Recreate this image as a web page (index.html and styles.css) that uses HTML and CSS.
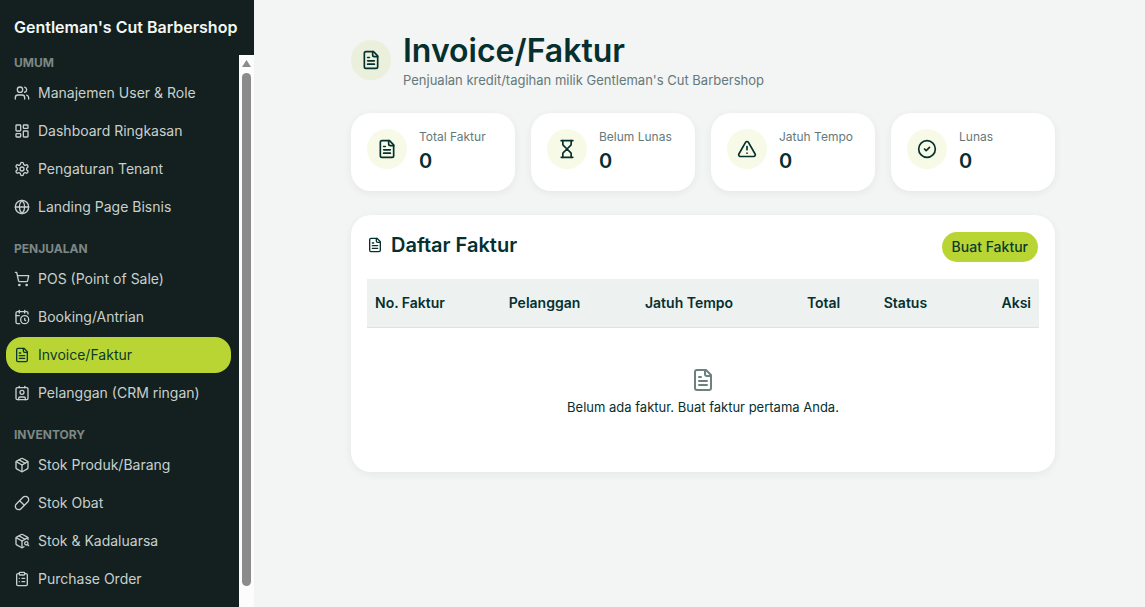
FILE: index.html
```html
<!DOCTYPE html>
<html lang="id">
<head>
    <meta charset="UTF-8">
    <meta name="viewport" content="width=device-width, initial-scale=1.0">
    <title>Invoice/Faktur - Gentleman's Cut Barbershop</title>
    <link rel="stylesheet" href="styles.css">
</head>
<body>
    <!-- Shared icons -->
    <svg class="sprite" aria-hidden="true">
        <symbol id="icon-file" viewBox="0 0 24 24">
            <path d="M15 2H6a2 2 0 0 0-2 2v16a2 2 0 0 0 2 2h12a2 2 0 0 0 2-2V7Z"/>
            <path d="M14 2v4a2 2 0 0 0 2 2h4"/>
            <path d="M10 9H8"/>
            <path d="M16 13H8"/>
            <path d="M16 17H8"/>
        </symbol>
    </svg>

    <div class="layout">
        <aside class="sidebar">
            <div class="brand">Gentleman's Cut Barbershop</div>
            <div class="sidebar-body">
                <nav class="nav">
                    <div class="nav-group">
                        <h2 class="nav-label">UMUM</h2>
                        <a href="#" class="nav-item">
                            <svg class="icon" viewBox="0 0 24 24"><path d="M16 21v-2a4 4 0 0 0-4-4H6a4 4 0 0 0-4 4v2"/><circle cx="9" cy="7" r="4"/><path d="M22 21v-2a4 4 0 0 0-3-3.87"/><path d="M16 3.13a4 4 0 0 1 0 7.75"/></svg>
                            <span>Manajemen User &amp; Role</span>
                        </a>
                        <a href="#" class="nav-item">
                            <svg class="icon" viewBox="0 0 24 24"><rect x="3" y="3" width="7" height="9" rx="1"/><rect x="14" y="3" width="7" height="5" rx="1"/><rect x="14" y="12" width="7" height="9" rx="1"/><rect x="3" y="16" width="7" height="5" rx="1"/></svg>
                            <span>Dashboard Ringkasan</span>
                        </a>
                        <a href="#" class="nav-item">
                            <svg class="icon" viewBox="0 0 24 24"><path d="M12.22 2h-.44a2 2 0 0 0-2 2v.18a2 2 0 0 1-1 1.73l-.43.25a2 2 0 0 1-2 0l-.15-.08a2 2 0 0 0-2.73.73l-.22.38a2 2 0 0 0 .73 2.73l.15.1a2 2 0 0 1 1 1.72v.51a2 2 0 0 1-1 1.74l-.15.09a2 2 0 0 0-.73 2.73l.22.38a2 2 0 0 0 2.73.73l.15-.08a2 2 0 0 1 2 0l.43.25a2 2 0 0 1 1 1.73V20a2 2 0 0 0 2 2h.44a2 2 0 0 0 2-2v-.18a2 2 0 0 1 1-1.73l.43-.25a2 2 0 0 1 2 0l.15.08a2 2 0 0 0 2.73-.73l.22-.39a2 2 0 0 0-.73-2.73l-.15-.08a2 2 0 0 1-1-1.74v-.5a2 2 0 0 1 1-1.74l.15-.09a2 2 0 0 0 .73-2.73l-.22-.38a2 2 0 0 0-2.73-.73l-.15.08a2 2 0 0 1-2 0l-.43-.25a2 2 0 0 1-1-1.73V4a2 2 0 0 0-2-2z"/><circle cx="12" cy="12" r="3"/></svg>
                            <span>Pengaturan Tenant</span>
                        </a>
                        <a href="#" class="nav-item">
                            <svg class="icon" viewBox="0 0 24 24"><circle cx="12" cy="12" r="10"/><path d="M12 2a14.5 14.5 0 0 0 0 20 14.5 14.5 0 0 0 0-20"/><path d="M2 12h20"/></svg>
                            <span>Landing Page Bisnis</span>
                        </a>
                    </div>

                    <div class="nav-group">
                        <h2 class="nav-label">PENJUALAN</h2>
                        <a href="#" class="nav-item">
                            <svg class="icon" viewBox="0 0 24 24"><circle cx="8" cy="21" r="1"/><circle cx="19" cy="21" r="1"/><path d="M2.05 2.05h2l2.66 12.42a2 2 0 0 0 2 1.58h9.78a2 2 0 0 0 1.95-1.57l1.65-7.43H5.12"/></svg>
                            <span>POS (Point of Sale)</span>
                        </a>
                        <a href="#" class="nav-item">
                            <svg class="icon" viewBox="0 0 24 24"><path d="M21 7.5V6a2 2 0 0 0-2-2H5a2 2 0 0 0-2 2v14a2 2 0 0 0 2 2h3.5"/><path d="M16 2v4"/><path d="M8 2v4"/><path d="M3 10h5"/><path d="M17.5 17.5 16 16.3V14"/><circle cx="16" cy="16" r="6"/></svg>
                            <span>Booking/Antrian</span>
                        </a>
                        <a href="#" class="nav-item active" aria-current="page">
                            <svg class="icon"><use href="#icon-file"/></svg>
                            <span>Invoice/Faktur</span>
                        </a>
                        <a href="#" class="nav-item">
                            <svg class="icon" viewBox="0 0 24 24"><path d="M16 2v2"/><path d="M7 22v-2a2 2 0 0 1 2-2h6a2 2 0 0 1 2 2v2"/><path d="M8 2v2"/><circle cx="12" cy="11" r="3"/><rect x="3" y="4" width="18" height="18" rx="2"/></svg>
                            <span>Pelanggan (CRM ringan)</span>
                        </a>
                    </div>

                    <div class="nav-group">
                        <h2 class="nav-label">INVENTORY</h2>
                        <a href="#" class="nav-item">
                            <svg class="icon" viewBox="0 0 24 24"><path d="M11 21.73a2 2 0 0 0 2 0l7-4A2 2 0 0 0 21 16V8a2 2 0 0 0-1-1.73l-7-4a2 2 0 0 0-2 0l-7 4A2 2 0 0 0 3 8v8a2 2 0 0 0 1 1.73z"/><path d="M12 22V12"/><path d="M3.3 7 12 12l8.7-5"/><path d="m7.5 4.27 9 5.15"/></svg>
                            <span>Stok Produk/Barang</span>
                        </a>
                        <a href="#" class="nav-item">
                            <svg class="icon" viewBox="0 0 24 24"><path d="m10.5 20.5 10-10a4.95 4.95 0 1 0-7-7l-10 10a4.95 4.95 0 1 0 7 7Z"/><path d="m8.5 8.5 7 7"/></svg>
                            <span>Stok Obat</span>
                        </a>
                        <a href="#" class="nav-item">
                            <svg class="icon" viewBox="0 0 24 24"><path d="M21 10V8a2 2 0 0 0-1-1.73l-7-4a2 2 0 0 0-2 0l-7 4A2 2 0 0 0 3 8v8a2 2 0 0 0 1 1.73l7 4a2 2 0 0 0 2 0l2-1.14"/><path d="m7.5 4.27 9 5.15"/><path d="M3.29 7 12 12l8.71-5"/><path d="M12 22V12"/><circle cx="18.5" cy="15.5" r="2.5"/><path d="M20.27 17.27 22 19"/></svg>
                            <span>Stok &amp; Kadaluarsa</span>
                        </a>
                        <a href="#" class="nav-item">
                            <svg class="icon" viewBox="0 0 24 24"><rect x="8" y="2" width="8" height="4" rx="1"/><path d="M16 4h2a2 2 0 0 1 2 2v14a2 2 0 0 1-2 2H6a2 2 0 0 1-2-2V6a2 2 0 0 1 2-2h2"/><path d="M12 11h4"/><path d="M12 16h4"/><path d="M8 11h.01"/><path d="M8 16h.01"/></svg>
                            <span>Purchase Order</span>
                        </a>
                    </div>
                </nav>
                <div class="scrollbar" aria-hidden="true">
                    <div class="scroll-arrow"></div>
                    <div class="scroll-thumb"></div>
                </div>
            </div>
        </aside>

        <main class="main">
            <div class="container">
                <header class="page-header">
                    <div class="badge"><svg class="icon icon-lg"><use href="#icon-file"/></svg></div>
                    <div>
                        <h1>Invoice/Faktur</h1>
                        <p>Penjualan kredit/tagihan milik Gentleman's Cut Barbershop</p>
                    </div>
                </header>

                <!-- Summary -->
                <section class="stats">
                    <div class="card stat">
                        <div class="badge"><svg class="icon icon-lg"><use href="#icon-file"/></svg></div>
                        <div>
                            <div class="stat-label">Total Faktur</div>
                            <div class="stat-value">0</div>
                        </div>
                    </div>
                    <div class="card stat">
                        <div class="badge"><svg class="icon icon-lg" viewBox="0 0 24 24"><path d="M5 22h14"/><path d="M5 2h14"/><path d="M17 22v-4.17a2 2 0 0 0-.59-1.42L12 12l-4.41 4.41A2 2 0 0 0 7 17.83V22"/><path d="M7 2v4.17a2 2 0 0 0 .59 1.42L12 12l4.41-4.41A2 2 0 0 0 17 6.17V2"/></svg></div>
                        <div>
                            <div class="stat-label">Belum Lunas</div>
                            <div class="stat-value">0</div>
                        </div>
                    </div>
                    <div class="card stat">
                        <div class="badge"><svg class="icon icon-lg" viewBox="0 0 24 24"><path d="m21.73 18-8-14a2 2 0 0 0-3.48 0l-8 14A2 2 0 0 0 4 21h16a2 2 0 0 0 1.73-3"/><path d="M12 9v4"/><path d="M12 17h.01"/></svg></div>
                        <div>
                            <div class="stat-label">Jatuh Tempo</div>
                            <div class="stat-value">0</div>
                        </div>
                    </div>
                    <div class="card stat">
                        <div class="badge"><svg class="icon icon-lg" viewBox="0 0 24 24"><circle cx="12" cy="12" r="10"/><path d="m9 12 2 2 4-4"/></svg></div>
                        <div>
                            <div class="stat-label">Lunas</div>
                            <div class="stat-value">0</div>
                        </div>
                    </div>
                </section>

                <!-- Invoice list -->
                <section class="card invoices">
                    <div class="invoices-header">
                        <h2><svg class="icon"><use href="#icon-file"/></svg>Daftar Faktur</h2>
                        <button type="button" class="btn">Buat Faktur</button>
                    </div>
                    <table class="table">
                        <thead>
                            <tr>
                                <th>No. Faktur</th>
                                <th>Pelanggan</th>
                                <th>Jatuh Tempo</th>
                                <th>Total</th>
                                <th>Status</th>
                                <th class="col-action">Aksi</th>
                            </tr>
                        </thead>
                        <tbody>
                            <tr>
                                <td colspan="6" class="empty">
                                    <svg class="icon icon-xl"><use href="#icon-file"/></svg>
                                    <p>Belum ada faktur. Buat faktur pertama Anda.</p>
                                </td>
                            </tr>
                        </tbody>
                    </table>
                </section>
            </div>
        </main>
    </div>
</body>
</html>
```

FILE: styles.css
```css
* {
    margin: 0;
    padding: 0;
    box-sizing: border-box;
}

body {
    font-family: Inter, "Liberation Sans", sans-serif;
    font-size: 14px;
    background: #f3f4f4;
    color: #05302f;
}

.sprite {
    display: none;
}

.layout {
    display: flex;
    height: 100vh;
}

.icon {
    width: 16px;
    height: 16px;
    flex-shrink: 0;
    fill: none;
    stroke: currentColor;
    stroke-width: 2;
    stroke-linecap: round;
    stroke-linejoin: round;
}

.icon-lg {
    width: 20px;
    height: 20px;
}

.icon-xl {
    width: 24px;
    height: 24px;
}

/* Sidebar */
.sidebar {
    width: 254px;
    flex-shrink: 0;
    display: flex;
    flex-direction: column;
    background: #13201f;
    color: #c8d0ce;
}

.brand {
    height: 55px;
    flex-shrink: 0;
    padding-left: 14px;
    font-size: 16px;
    font-weight: 600;
    line-height: 55px;
    color: #f2f7f5;
    white-space: nowrap;
}

.sidebar-body {
    flex: 1;
    min-height: 0;
    display: flex;
}

.nav {
    flex: 1;
    overflow: hidden;
    padding: 0 8px 0 6px;
}

.nav-group {
    display: flex;
    flex-direction: column;
    gap: 2px;
    margin-bottom: 16px;
}

.nav-label {
    padding-left: 8px;
    margin-bottom: 2px;
    font-size: 12px;
    font-weight: 700;
    line-height: 16px;
    color: #7d8785;
}

.nav-item {
    display: flex;
    align-items: center;
    gap: 8px;
    height: 36px;
    padding: 0 8px;
    border-radius: 16px;
    font-size: 14px;
    line-height: 20px;
    color: inherit;
    text-decoration: none;
    white-space: nowrap;
}

.nav-item.active {
    background: #b9d533;
    color: #0b3a2c;
}

.scrollbar {
    width: 15px;
    display: flex;
    flex-direction: column;
    align-items: center;
    padding: 5px 0 21px;
    background: #fcfcfc;
}

.scroll-arrow {
    width: 9px;
    height: 7px;
    margin-bottom: 6px;
    background: #8b8b8b;
    clip-path: polygon(50% 0, 100% 100%, 0 100%);
}

.scroll-thumb {
    flex: 1;
    width: 9px;
    border-radius: 5px;
    background: #8b8b8b;
}

/* Content */
.main {
    flex: 1;
    padding: 31px 17px 24px 24px;
    overflow: hidden;
}

.container {
    max-width: 704px;
    margin: 0 auto;
}

.page-header {
    display: flex;
    align-items: center;
    gap: 12px;
    margin-bottom: 24px;
}

.page-header h1 {
    font-size: 32px;
    font-weight: 600;
    line-height: 40px;
}

.page-header p {
    font-size: 13px;
    line-height: 18px;
    color: #64797a;
}

.badge {
    width: 40px;
    height: 40px;
    flex-shrink: 0;
    display: flex;
    align-items: center;
    justify-content: center;
    border-radius: 50%;
    background: rgba(185, 213, 51, 0.12);
}

.card {
    background: #fff;
    border-radius: 20px;
    box-shadow: 0 2px 8px rgba(0, 0, 0, 0.06);
}

.stats {
    display: grid;
    grid-template-columns: repeat(4, 1fr);
    gap: 16px;
    margin-bottom: 24px;
}

.stat {
    display: flex;
    gap: 12px;
    padding: 16px;
}

.stat-label {
    font-size: 12px;
    line-height: 16px;
    color: #64797a;
}

.stat-value {
    margin-top: 2px;
    font-size: 20px;
    font-weight: 600;
    line-height: 28px;
}

.invoices {
    padding: 16px;
}

.invoices-header {
    display: flex;
    align-items: flex-start;
    justify-content: space-between;
    margin-bottom: 16px;
}

.invoices-header h2 {
    display: flex;
    align-items: center;
    gap: 8px;
    font-size: 20px;
    font-weight: 600;
    line-height: 28px;
}

.btn {
    height: 32px;
    padding: 0 10px;
    border: 1px solid transparent;
    border-radius: 16px;
    background: #b9d533;
    background-clip: padding-box;
    color: #0b3a2c;
    font-family: inherit;
    font-size: 14px;
    font-weight: 500;
    line-height: 20px;
    cursor: pointer;
}

.table {
    width: 100%;
    border-collapse: collapse;
}

.table th {
    height: 48px;
    padding: 0 8px;
    background: #edf2f1;
    border-bottom: 1px solid #dce3e2;
    font-weight: 600;
    text-align: left;
    white-space: nowrap;
}

.table .col-action {
    text-align: right;
}

.empty {
    padding: 40px 8px 39px;
    font-size: 13px;
    line-height: 20px;
    text-align: center;
}

.empty .icon {
    color: #6b827e;
}
```
